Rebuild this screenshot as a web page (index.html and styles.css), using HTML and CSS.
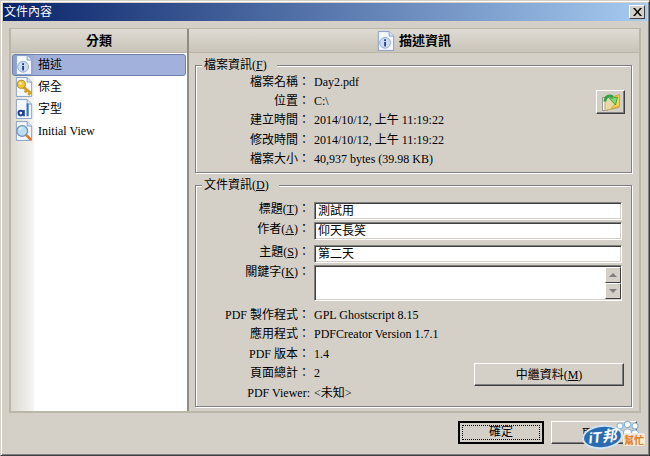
FILE: index.html
```html
<!DOCTYPE html>
<html lang="zh-Hant">
<head>
  <meta charset="UTF-8">
  <title>文件內容</title>
  <link rel="stylesheet" href="styles.css">
</head>
<body>
  <div class="window">
    <!-- Title bar -->
    <div class="titlebar">
      <span>文件內容</span>
      <button class="close-btn" type="button">
        <svg width="9" height="8" viewBox="0 0 9 8"><path d="M0 0h2l2.500 3L7 0h2L5.500 4 9 8H7L4.500 5 2 8H0l3.500-4z" fill="#000"/></svg>
      </button>
    </div>

    <!-- Main panel -->
    <div class="panel">
      <div class="side">
        <div class="head">分類</div>
        <div class="list">
          <div class="item selected">
            <svg class="icon" viewBox="0 0 20 22"><use href="#page"/><circle cx="9" cy="13" r="6" fill="#cfdcf0" stroke="#8ba5d0"/><rect x="8" y="9" width="2" height="2" fill="#1c3f94"/><rect x="8" y="12" width="2" height="5" fill="#1c3f94"/></svg>
            <span>描述</span>
          </div>
          <div class="item">
            <svg class="icon" viewBox="0 0 20 22"><use href="#page"/><path d="M8 10l10 8M13 14l-2 3M17 17l-2 3" stroke="#d0a020" stroke-width="3" fill="none"/><circle cx="7" cy="8" r="4.500" fill="#f2c83a" stroke="#a8801a"/><circle cx="6" cy="7" r="1.300" fill="#fff6c8"/></svg>
            <span>保全</span>
          </div>
          <div class="item">
            <svg class="icon" viewBox="0 0 20 22"><use href="#page"/><circle cx="6.500" cy="15.500" r="2.600" fill="none" stroke="#1c3f94" stroke-width="2.200"/><path d="M10 12v7" stroke="#1c3f94" stroke-width="1.800"/><path d="M14 5v14" stroke="#2f6fd0" stroke-width="2.400"/></svg>
            <span>字型</span>
          </div>
          <div class="item">
            <svg class="icon" viewBox="0 0 20 22"><use href="#page"/><path d="M12 15l6 6" stroke="#e07a28" stroke-width="3"/><circle cx="8" cy="11" r="6" fill="#bcdcf4" stroke="#6f93b4" stroke-width="1.500"/><path d="M5 10a3.500 3.500 0 0 1 3-3" stroke="#fff" fill="none"/></svg>
            <span>Initial View</span>
          </div>
        </div>
      </div>

      <div class="main">
        <div class="head">
          <svg class="icon" viewBox="0 0 20 22"><use href="#page"/><circle cx="9" cy="13" r="6" fill="#cfdcf0" stroke="#8ba5d0"/><rect x="8" y="9" width="2" height="2" fill="#1c3f94"/><rect x="8" y="12" width="2" height="5" fill="#1c3f94"/></svg>
          <span>描述資訊</span>
        </div>
        <div class="content">
          <!-- File info -->
          <fieldset class="group group-file">
            <legend>檔案資訊(<u>F</u>)</legend>
            <div class="group-body">
              <div class="rows rows-file">
                <div class="row"><label>檔案名稱：</label><span class="value">Day2.pdf</span></div>
                <div class="row"><label>位置：</label><span class="value">C:\</span></div>
                <div class="row"><label>建立時間：</label><span class="value">2014/10/12, 上午 11:19:22</span></div>
                <div class="row"><label>修改時間：</label><span class="value">2014/10/12, 上午 11:19:22</span></div>
                <div class="row"><label>檔案大小：</label><span class="value">40,937 bytes (39.98 KB)</span></div>
              </div>
              <button class="open-btn" type="button">
                <svg width="20" height="20" viewBox="0 0 20 20">
                  <rect x="1.500" y="5.500" width="5" height="13" fill="#f4f4f0" stroke="#9a9a9a"/>
                  <path d="M4 4.500h14v11l-14 3z" fill="#e8d9a8" stroke="#c4a860"/>
                  <path d="M10 17l8.500-3V2.500L14 4v8z" fill="#f6d64a" stroke="#c9a83a"/>
                  <path d="M4 9.500C4 4.500 8 3 12 5" stroke="#35a247" stroke-width="3" fill="none"/>
                  <path d="M8.500 6.500l8-1.500-2 8z" fill="#7fd873" stroke="#2a8a3a" stroke-width=".7"/>
                </svg>
              </button>
            </div>
          </fieldset>

          <!-- Document info -->
          <fieldset class="group group-doc">
            <legend>文件資訊(<u>D</u>)</legend>
            <div class="fields">
              <div class="field"><label>標題(<u>T</u>)：</label><div class="input">測試用</div></div>
              <div class="field field-author"><label>作者(<u>A</u>)：</label><div class="input">仰天長笑</div></div>
              <div class="field field-subject"><label>主題(<u>S</u>)：</label><div class="input">第二天</div></div>
              <div class="field field-keywords"><label>關鍵字(<u>K</u>)：</label>
                <div class="input textarea">
                  <div class="spin">
                    <span class="spin-btn"><i class="arrow up"></i></span>
                    <span class="spin-btn"><i class="arrow down"></i></span>
                  </div>
                </div>
              </div>
            </div>
            <div class="doc-bottom">
              <div class="rows rows-doc">
                <div class="row"><label>PDF 製作程式：</label><span class="value">GPL Ghostscript 8.15</span></div>
                <div class="row"><label>應用程式：</label><span class="value">PDFCreator Version 1.7.1</span></div>
                <div class="row"><label>PDF 版本：</label><span class="value">1.4</span></div>
                <div class="row"><label>頁面總計：</label><span class="value">2</span></div>
                <div class="row"><label>PDF Viewer:</label><span class="value">&lt;未知&gt;</span></div>
              </div>
              <button class="btn meta-btn" type="button">中繼資料(<u>M</u>)</button>
            </div>
          </fieldset>
        </div>
      </div>
    </div>

    <!-- Dialog buttons -->
    <div class="actions">
      <button class="btn ok-btn" type="button"><span>確定</span></button>
      <button class="btn" type="button">取消</button>
    </div>
  </div>

  <!-- Watermark -->
  <div class="watermark">
    <svg class="people" width="25" height="16" viewBox="0 0 25 16">
      <g fill="#fff" stroke="#8fb4d6" stroke-width="1.200">
        <path d="M1 15c0-4 2-5 4-5s4 1 4 5zM16 15c0-4 2-5 4-5s4 1 4 5zM8 15c0-5 2-6 4.500-6s4.500 1 4.500 6z"/>
        <circle cx="5" cy="6" r="3"/><circle cx="20" cy="6" r="3"/><circle cx="12.500" cy="4.500" r="3.200"/>
      </g>
    </svg>
    <div class="badge"><b>iT邦</b></div>
    <div class="help">幫忙</div>
  </div>

  <svg class="defs" width="0" height="0">
    <defs>
      <g id="page">
        <path d="M1.500 .5h12l5 5v16h-17z" fill="#f4f7fc" stroke="#7f9bc4"/>
        <path d="M13.500 .5v5h5" fill="#dbe4f2" stroke="#7f9bc4"/>
      </g>
    </defs>
  </svg>
</body>
</html>
```

FILE: styles.css
```css
/* Global Styles */
* {
  box-sizing: border-box;
}

body {
  margin: 0;
  width: 650px;
  height: 456px;
  overflow: hidden;
  position: relative;
  font-family: "Liberation Serif", "Noto Sans CJK TC", serif;
  font-size: 12px;
  line-height: 14px;
  color: #000;
  background: #d4d0c8;
}

.window {
  width: 650px;
  height: 456px;
  display: flex;
  flex-direction: column;
  padding: 2px;
  background: #d4d0c8;
  border: 1px solid;
  border-color: #d4d0c8 #404040 #404040 #d4d0c8;
  box-shadow: inset 1px 1px 0 #fff, inset -1px -1px 0 #808080;
}

/* Title bar */
.titlebar {
  height: 18px;
  padding: 0 2px 0 1px;
  display: flex;
  align-items: center;
  justify-content: space-between;
  color: #fff;
  background: linear-gradient(90deg, #0a246a 0%, #a6caf0 100%);
}

.close-btn {
  width: 16px;
  height: 14px;
  padding: 0;
  display: flex;
  align-items: center;
  justify-content: center;
  background: #d4d0c8;
  border: 1px solid;
  border-color: #fff #404040 #404040 #fff;
}

/* Main panel */
.panel {
  height: 385px;
  margin: 7px 6px 0 6px;
  display: flex;
  border: 2px solid #bab6a8;
  border-top-width: 1px;
}

.head {
  height: 24px;
  flex: none;
  display: flex;
  align-items: center;
  justify-content: center;
  gap: 4px;
  font-weight: bold;
  font-size: 13px;
  border-bottom: 1px solid #bab6a8;
  background: linear-gradient(180deg, #dfdcd5 0%, #c8c4b9 100%);
}

.side {
  width: 178px;
  display: flex;
  flex-direction: column;
  border-right: 2px solid #8f8c84;
}

.list {
  flex: 1;
  padding: 1px 0 0 1px;
  background: linear-gradient(90deg, #dcd9d2 0, #f6f5f2 23px, #fff 23px);
}

.item {
  height: 22px;
  margin-right: 1px;
  display: flex;
  align-items: center;
  gap: 5px;
  padding-left: 3px;
}

.item.selected {
  background: rgba(70, 100, 185, 0.5);
  border: 1px solid #6f80ad;
  border-radius: 3px;
  padding-left: 2px;
}

.icon {
  width: 18px;
  height: 20px;
  flex: none;
}

.main {
  flex: 1;
  min-width: 0;
  display: flex;
  flex-direction: column;
}

.content {
  flex: 1;
  padding: 5px 7px 4px 6px;
  display: flex;
  flex-direction: column;
  gap: 5px;
}

/* Groups */
.group {
  margin: 0;
  padding: 0;
  border: 1px solid #808080;
  box-shadow: 1px 1px 0 #fff, inset 1px 1px 0 #fff;
  min-width: 0;
}

.group legend {
  margin-left: 6px;
  padding: 0 10px 0 2px;
  background: #d4d0c8;
}

.group-file {
  height: 115px;
  flex: none;
}

.group-doc {
  flex: 1;
}

.group-body {
  display: flex;
  align-items: flex-start;
}

.rows {
  flex: 1;
  display: flex;
  flex-direction: column;
}

.row {
  height: 19.300px;
  display: flex;
  align-items: center;
}

.row label {
  width: 114px;
  flex: none;
  text-align: right;
}

.value {
  padding-left: 4px;
}

.open-btn {
  width: 29px;
  height: 24px;
  margin: 18px 6px 0 0;
  padding: 0;
  display: flex;
  align-items: center;
  justify-content: center;
  background: #d4d0c8;
  border: 1px solid;
  border-color: #fff #404040 #404040 #fff;
  box-shadow: inset -1px -1px 0 #808080;
}

/* Document fields */
.fields {
  padding: 10px 9px 0 0;
  display: flex;
  flex-direction: column;
}

.field {
  display: flex;
}

.field-author {
  margin-top: 2px;
}

.field-subject {
  margin-top: 5px;
}

.field-keywords {
  margin-top: 2px;
}

.field label {
  width: 114px;
  margin-right: 4px;
  flex: none;
  text-align: right;
}

.input {
  flex: 1;
  height: 18px;
  padding-left: 3px;
  line-height: 16px;
  background: #fff;
  border: 1px solid;
  border-color: #808080 #fff #fff #808080;
  box-shadow: inset 1px 1px 0 #404040, inset -1px -1px 0 #d4d0c8;
}

.textarea {
  height: 36px;
  position: relative;
}

.spin {
  position: absolute;
  top: 1px;
  right: 0;
  width: 16px;
  display: flex;
  flex-direction: column;
}

.spin-btn {
  height: 16px;
  display: flex;
  align-items: center;
  justify-content: center;
  background: #d4d0c8;
  border: 1px solid;
  border-color: #fff #404040 #404040 #fff;
}

.arrow {
  width: 0;
  height: 0;
  border-left: 4px solid transparent;
  border-right: 4px solid transparent;
}

.arrow.up {
  border-bottom: 4px solid #808080;
}

.arrow.down {
  border-top: 4px solid #808080;
}

.doc-bottom {
  margin-top: 4px;
  display: flex;
  align-items: flex-end;
}

.rows-doc .row {
  height: 19.500px;
}

.btn {
  height: 23px;
  padding: 0;
  flex: none;
  font-family: inherit;
  font-size: 12px;
  background: #d4d0c8;
  border: 1px solid;
  border-color: #fff #404040 #404040 #fff;
  box-shadow: inset -1px -1px 0 #808080;
}

.meta-btn {
  width: 150px;
  margin: 0 7px 17px 0;
}

/* Dialog buttons */
.actions {
  flex: 1;
  padding: 8px 10px 0 0;
  display: flex;
  justify-content: flex-end;
  align-items: flex-start;
  gap: 7px;
}

.actions .btn {
  width: 86px;
}

.ok-btn {
  border: 2px solid #000;
  padding: 2px;
  box-shadow: none;
}

.ok-btn span {
  display: block;
  height: 100%;
  line-height: 13px;
  border: 1px dotted #000;
}

/* Watermark */
.watermark {
  position: absolute;
  right: 4px;
  bottom: 7px;
  width: 64px;
  height: 29px;
}

.people {
  position: absolute;
  top: 0;
  left: 33px;
}

.badge {
  position: absolute;
  left: 0;
  bottom: 0;
  width: 41px;
  height: 24px;
  display: flex;
  align-items: center;
  justify-content: center;
  color: #fff;
  font-family: "Liberation Sans", "Noto Sans CJK TC", sans-serif;
  font-size: 15px;
  font-style: italic;
  background: #2a6cb0;
  border: 2px solid #d5e4f2;
  border-radius: 50%;
  transform: rotate(-6deg);
}

.help {
  position: absolute;
  left: 41px;
  top: 13px;
  width: 22px;
  height: 13px;
  text-align: center;
  font-family: "Noto Sans CJK TC", sans-serif;
  font-size: 10px;
  line-height: 13px;
  font-weight: bold;
  color: #e07c24;
  background: #f0ead8;
  border-radius: 3px;
}

.defs {
  position: absolute;
}
```
